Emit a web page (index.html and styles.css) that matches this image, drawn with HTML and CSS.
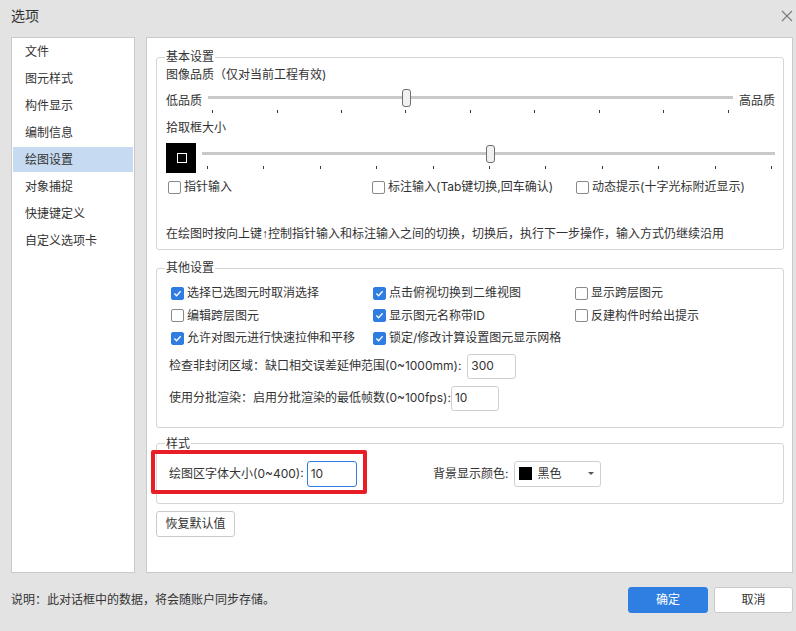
FILE: index.html
```html
<!DOCTYPE html>
<html lang="zh-CN">
<head>
<meta charset="utf-8">
<title>选项</title>
<link rel="stylesheet" href="styles.css">
</head>
<body>
<div class="dialog">
  <header class="titlebar">
    <span class="title">选项</span>
    <button class="close" aria-label="关闭"><svg width="12" height="12" viewBox="0 0 12 12"><path d="M1 1L11 11M11 1L1 11" stroke="#7a7a7a" stroke-width="1.1" fill="none"/></svg></button>
  </header>
  <div class="main">
    <nav class="nav">
      <div class="nav-item">文件</div>
      <div class="nav-item">图元样式</div>
      <div class="nav-item">构件显示</div>
      <div class="nav-item">编制信息</div>
      <div class="nav-item active">绘图设置</div>
      <div class="nav-item">对象捕捉</div>
      <div class="nav-item">快捷键定义</div>
      <div class="nav-item">自定义选项卡</div>
    </nav>
    <section class="content">
      <fieldset class="group group-basic">
        <legend>基本设置</legend>
        <div class="line">图像品质（仅对当前工程有效)</div>
        <div class="slider-row quality">
          <span class="slider-label">低品质</span>
          <div class="slider s1">
            <div class="slider-bar"><div class="slider-range"><span class="handle" style="left:37.5%"></span></div></div>
            <div class="ticks"><i></i><i></i><i></i><i></i><i></i><i></i><i></i><i></i><i></i></div>
          </div>
          <span class="slider-label">高品质</span>
        </div>
        <div class="line pick-title">拾取框大小</div>
        <div class="slider-row pick">
          <div class="pick-preview"><span></span></div>
          <div class="slider s2">
            <div class="slider-bar"><div class="slider-range"><span class="handle" style="left:50%"></span></div></div>
            <div class="ticks"><i></i><i></i><i></i><i></i><i></i><i></i><i></i><i></i><i></i><i></i><i></i></div>
          </div>
        </div>
        <div class="check-grid g1">
          <label class="check"><span class="box"></span>指针输入</label>
          <label class="check"><span class="box"></span>标注输入(Tab键切换,回车确认)</label>
          <label class="check"><span class="box"></span>动态提示(十字光标附近显示)</label>
        </div>
        <p class="hint">在绘图时按向上键<span class="arrow-glyph">↑</span>控制指针输入和标注输入之间的切换，切换后，执行下一步操作，输入方式仍继续沿用</p>
      </fieldset>

      <fieldset class="group group-other">
        <legend>其他设置</legend>
        <div class="check-grid g2">
          <label class="check"><span class="box on"><svg viewBox="0 0 13 13"><path d="M2.8 6.6L5.4 9.1L10.2 3.9"/></svg></span>选择已选图元时取消选择</label>
          <label class="check"><span class="box on"><svg viewBox="0 0 13 13"><path d="M2.8 6.6L5.4 9.1L10.2 3.9"/></svg></span>点击俯视切换到二维视图</label>
          <label class="check"><span class="box"></span>显示跨层图元</label>
          <label class="check"><span class="box"></span>编辑跨层图元</label>
          <label class="check"><span class="box on"><svg viewBox="0 0 13 13"><path d="M2.8 6.6L5.4 9.1L10.2 3.9"/></svg></span>显示图元名称带ID</label>
          <label class="check"><span class="box"></span>反建构件时给出提示</label>
          <label class="check"><span class="box on"><svg viewBox="0 0 13 13"><path d="M2.8 6.6L5.4 9.1L10.2 3.9"/></svg></span>允许对图元进行快速拉伸和平移</label>
          <label class="check"><span class="box on"><svg viewBox="0 0 13 13"><path d="M2.8 6.6L5.4 9.1L10.2 3.9"/></svg></span>锁定/修改计算设置图元显示网格</label>
        </div>
        <div class="field-row first">
          <span>检查非封闭区域：缺口相交误差延伸范围(0~1000mm):</span>
          <span class="input w49">300</span>
        </div>
        <div class="field-row second">
          <span>使用分批渲染：启用分批渲染的最低帧数(0~100fps):</span>
          <span class="input w48">10</span>
        </div>
      </fieldset>

      <fieldset class="group group-style">
        <legend>样式</legend>
        <div class="style-row">
          <div class="style-cell">
            <span>绘图区字体大小(0~400):</span>
            <span class="input focus">10</span>
            <span class="highlight"></span>
          </div>
          <div class="style-cell">
            <span>背景显示颜色:</span>
            <span class="select"><span class="swatch"></span><span>黑色</span><span class="arrow"></span></span>
          </div>
        </div>
      </fieldset>

      <button class="btn reset">恢复默认值</button>
    </section>
  </div>
  <footer class="footer">
    <span class="note">说明：此对话框中的数据，将会随账户同步存储。</span>
    <div class="actions">
      <button class="btn primary">确定</button>
      <button class="btn cancel">取消</button>
    </div>
  </footer>
</div>
</body>
</html>
```

FILE: styles.css
```css
* { box-sizing: border-box; }
html, body { margin: 0; padding: 0; }
body {
  width: 796px;
  height: 631px;
  overflow: hidden;
  background: #e3e3e3;
  font-family: Inter, "Noto Sans CJK SC", sans-serif;
  font-size: 12px;
  line-height: 18px;
  color: #333;
}
.dialog { display: flex; flex-direction: column; height: 631px; }

.titlebar {
  height: 37px;
  padding: 0 3px 5px 11px;
  display: flex;
  align-items: center;
}
.title { font-size: 14px; }
.close {
  margin-left: auto;
  width: 12px;
  height: 12px;
  padding: 0;
  border: 0;
  background: none;
  display: flex;
}

.main {
  display: flex;
  gap: 11px;
  padding: 0 3px 0 11px;
  height: 536px;
}
.nav {
  width: 124px;
  flex: none;
  background: #fff;
  border: 1px solid #cacaca;
  padding-top: 1px;
}
.nav-item {
  height: 25px;
  margin: 0 1px 2px;
  padding-left: 12px;
  line-height: 26px;
  white-space: nowrap;
}
.nav-item.active { background: #c6dbf1; }

.content {
  flex: 1;
  min-width: 0;
  background: #fff;
  border: 1px solid #cacaca;
  padding-top: 10px;
}

.group {
  margin: 0 8px 0 9px;
  border: 1px solid #d6d6d6;
  border-radius: 3px;
  padding: 0 8px 6px 9px;
  min-width: 0;
}
.group legend {
  padding: 0 1px;
  margin-left: -1px;
  line-height: 18px;
}
.group-other { margin-top: 9px; padding-bottom: 16px; }
.group-style { margin-top: 7px; padding-bottom: 16px; }

.line { height: 18px; white-space: nowrap; }

.slider-row { display: flex; align-items: flex-start; gap: 6px; }
.slider-row.quality { margin-top: 5px; }
.slider-label { padding-top: 3px; white-space: nowrap; }
.slider { flex: 1; }
.slider-bar { position: relative; height: 18px; }
.slider-bar::before {
  content: "";
  position: absolute;
  left: 0;
  right: 0;
  top: 7px;
  height: 3px;
  background: #c9c9c9;
}
.slider-range { position: absolute; top: 0; bottom: 0; left: 4px; right: 4px; }
.handle {
  position: absolute;
  top: 0;
  width: 9px;
  height: 18px;
  margin-left: -4px;
  border: 1px solid #6f6f6f;
  border-radius: 3px;
  background: #f1f1f3;
}
.ticks {
  display: flex;
  justify-content: space-between;
  padding: 0 4px;
  margin-top: 3px;
}
.ticks i { display: block; width: 1px; height: 3px; background: #3a3a3a; }
.s2 .slider-range { left: 5px; right: 3px; }
.s2 .ticks { padding: 0 3px 0 5px; }

.pick-title { margin-top: 6px; }
.slider-row.pick { margin-top: 6px; }
.pick .slider { margin-top: 2px; }
.pick-preview {
  width: 30px;
  height: 30px;
  flex: none;
  background: #000;
  display: flex;
  align-items: center;
  justify-content: center;
}
.pick-preview span {
  width: 10px;
  height: 10px;
  margin-left: 1px;
  border: 1.5px solid #fff;
}

.check-grid { display: grid; }
.check-grid.g1 {
  grid-template-columns: repeat(3, 204px);
  margin: 5px 0 0 2px;
}
.check-grid.g2 {
  grid-template-columns: repeat(3, 202px);
  grid-auto-rows: 22.5px;
  margin: 5px 0 0 5px;
}
.check {
  display: flex;
  align-items: center;
  gap: 3px;
  height: 18px;
  white-space: nowrap;
}
.g2 .check { height: 22.5px; }
.box {
  width: 13px;
  height: 13px;
  flex: none;
  border: 1px solid #8a8a8a;
  border-radius: 2px;
  background: #fff;
  display: flex;
}
.box.on { background: #2f7de1; border-color: #2f7de1; }
.box svg { width: 11px; height: 11px; }
.box svg path { fill: none; stroke: #fff; stroke-width: 1.6; }

.hint { margin: 29px 0 0; white-space: nowrap; }
.arrow-glyph { font-family: "Liberation Sans", sans-serif; }

.field-row {
  display: flex;
  align-items: center;
  margin-left: 3px;
  white-space: nowrap;
}
.field-row.first { margin-top: 4px; }
.field-row.second { margin-top: 7px; }
.field-row.first .input { margin-left: 6px; }
.field-row.second .input { margin-left: 0; }

.input {
  height: 25px;
  border: 1px solid #cfcfcf;
  border-radius: 3px;
  padding: 0 3px;
  display: flex;
  align-items: center;
  background: #fff;
  flex: none;
}
.w49 { width: 49px; }
.w48 { width: 48px; }
.input.focus {
  width: 50px;
  height: 26px;
  margin-left: 3px;
  border-color: #2f7de1;
}

.style-row {
  display: grid;
  grid-template-columns: 264px auto;
  margin: 8px 0 0 3px;
}
.style-cell {
  display: flex;
  align-items: center;
  position: relative;
  white-space: nowrap;
}
.highlight {
  position: absolute;
  left: -18px;
  top: -11px;
  width: 216px;
  height: 44px;
  border: 4px solid #e81e27;
  border-radius: 2px;
}
.select {
  width: 87px;
  height: 26px;
  margin-left: 6px;
  border: 1px solid #cfcfcf;
  border-radius: 3px;
  display: flex;
  align-items: center;
  padding: 0 6px 0 4px;
  gap: 5px;
}
.swatch { width: 13px; height: 13px; background: #000; flex: none; }
.arrow {
  margin-left: auto;
  width: 0;
  height: 0;
  border-left: 3px solid transparent;
  border-right: 3px solid transparent;
  border-top: 3px solid #555;
}

.btn {
  height: 26px;
  border: 1px solid #cacaca;
  border-radius: 3px;
  background: #fff;
  font: inherit;
  color: #333;
  padding: 0;
  cursor: pointer;
}
.reset { display: block; width: 79px; margin: 7px 0 0 9px; }

.footer {
  flex: 1;
  display: flex;
  align-items: center;
  padding: 0 3px 4px 11px;
}
.actions { margin-left: auto; display: flex; gap: 6px; }
.primary { width: 80px; background: #2e7fe1; border-color: #2e7fe1; color: #fff; }
.cancel { width: 79px; }
```
